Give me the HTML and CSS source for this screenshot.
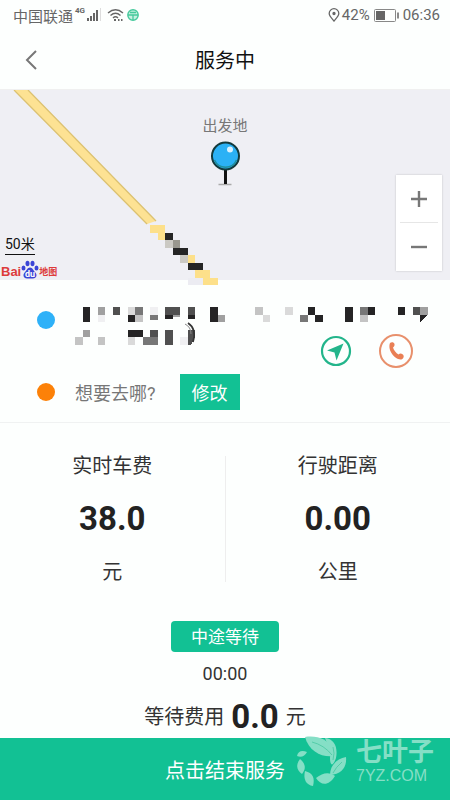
FILE: index.html
```html
<!DOCTYPE html>
<html lang="zh-CN">
<head>
    <meta charset="UTF-8">
    <meta name="viewport" content="width=device-width, initial-scale=1.0">
    <title>服务中</title>
    <link rel="stylesheet" href="styles.css">
</head>
<body>

    <!-- 状态栏 -->
    <div class="status-bar">
        <div class="status-left">
            <span>中国联通</span>
            <span class="network">4G</span>
            <svg class="signal" width="16" height="14" viewBox="0 0 16 14">
                <path d="M0 10h2v3H0zM3 8h2v5H3zM6 5h2v8H6zM9 2h2v11H9z" fill="#666"/>
                <path d="M13.500 0v13" stroke="#ddd"/>
            </svg>
            <svg width="18" height="14" viewBox="0 0 18 14" fill="none" stroke="#666" stroke-width="1.4">
                <path d="M1 5Q8.500-1.500 16 5M3.500 7.500Q8.500 3 13.500 7.500M6 10Q8.500 7.500 11 10"/>
                <path d="M7 12h2M11 12h1.500M14 12h1.500" stroke-width="2"/>
            </svg>
            <svg class="wheel" width="12" height="12" viewBox="0 0 12 12" fill="none" stroke="#45c99c">
                <circle cx="6" cy="6" r="5.200" fill="#c7f0e1" stroke-width="1.400"/>
                <path d="M1 6h10M6 6v5M3 3.500h6" stroke-width="1.300"/>
            </svg>
        </div>
        <div class="status-right">
            <svg width="12" height="14" viewBox="0 0 12 14" fill="none" stroke="#666" stroke-width="1.300">
                <path d="M6 13C4 10.500 1.200 8 1.200 5.500a4.800 4.800 0 0 1 9.600 0C10.800 8 8 10.500 6 13z"/>
                <circle cx="6" cy="5.500" r="1" fill="#666"/>
            </svg>
            <span>42%</span>
            <svg class="battery" width="25" height="13" viewBox="0 0 25 13">
                <rect x=".5" y=".5" width="21" height="12" rx="1" fill="none" stroke="#888"/>
                <path d="M2 2h9v9H2z" fill="#666"/>
                <path d="M24 3.500v6" stroke="#666" stroke-width="1.500"/>
            </svg>
            <span>06:36</span>
        </div>
    </div>

    <header class="header">
        <button class="back" aria-label="返回">
            <svg width="12" height="20" viewBox="0 0 12 20" fill="none" stroke="#777" stroke-width="2">
                <path d="M11 1L2 10l9 9"/>
            </svg>
        </button>
        <h1>服务中</h1>
    </header>

    <!-- 地图 -->
    <div class="map">
        <svg class="road" width="450" height="196" viewBox="0 0 450 196">
            <path d="M14 0H28L156 131L147 134Z" fill="#fde293"/>
            <path d="M14 0L147 134M28 0L156 131" stroke="#dcc272" stroke-width="1.300"/>
            <g transform="scale(7.5)" shape-rendering="crispEdges">
                <path d="M20 18h2v1h-2zM21 19h1v1h-1zM25 22h1v1h-1zM26 24h2v1h-2zM27 25h2v1h-2z" fill="#fde08a"/>
                <path d="M25 25h2v1h-2z" fill="#ececf2"/>
                <path d="M22 20h1v1h-1zM24 22h1v1h-1z" fill="#cbc9c3"/>
                <path d="M23 20h1v1h-1z" fill="#99978e"/>
                <path d="M22 19h1v1h-1zM23 21h2v1h-2zM25 23h2v1h-2z" fill="#252525"/>
            </g>
        </svg>
        <div class="pin">
            <span>出发地</span>
            <svg width="30" height="46" viewBox="0 0 30 46">
                <path d="M8 43.500h13" stroke="#aaa" stroke-width="1.500"/>
                <path d="M15 28v15" stroke="#111" stroke-width="3"/>
                <circle cx="15" cy="15" r="13.500" fill="#2bb1f5" stroke="#143a3c" stroke-width="2"/>
                <path d="M4 19a12 12 0 0 0 22 0" fill="none" stroke="#1f8f9d" stroke-width="1.500"/>
                <circle cx="19.500" cy="8.500" r="3" fill="#d9f2ff"/>
            </svg>
        </div>
        <div class="map-scale">50米</div>
        <div class="map-logo">
            <span class="logo-bai">Bai</span>
            <svg width="18" height="19" viewBox="0 0 18 19" fill="#3b45d6">
                <ellipse cx="2.500" cy="8" rx="2" ry="2.600"/>
                <ellipse cx="6.500" cy="3.500" rx="2" ry="2.800"/>
                <ellipse cx="11.500" cy="3.500" rx="2" ry="2.800"/>
                <ellipse cx="15.500" cy="8" rx="2" ry="2.600"/>
                <path d="M9 7.500c2.500 0 3.500 3 5 4.500 3 3 1 6.500-2 6.500H6c-3 0-5-3.500-2-6.500C5.500 10.500 6.500 7.500 9 7.500z"/>
                <text x="4" y="17" class="logo-du">du</text>
            </svg>
            <span class="logo-map">地图</span>
        </div>
        <div class="zoom">
            <button aria-label="放大">
                <svg width="18" height="18" viewBox="0 0 18 18"><path d="M1 9h16M9 1v16" stroke="#777" stroke-width="2.400"/></svg>
            </button>
            <button aria-label="缩小">
                <svg width="18" height="18" viewBox="0 0 18 18"><path d="M1 9h16" stroke="#777" stroke-width="2.400"/></svg>
            </button>
        </div>
    </div>

    <!-- 行程地址 -->
    <section class="trip">
        <div class="trip-start">
            <span class="dot blue"></span>
            <svg width="354" height="39" viewBox="0 0 354 39">
                <g transform="scale(7.5)" shape-rendering="crispEdges">
                    <path d="M1 0h1v2h-1zM7 1h1v1h-1zM12 1h1v.6h-1zM15 1h1v.6h-1zM18 0h1v2h-1zM7 3h2v1h-2zM31 0h1v1h-1zM32 1h1v1h-1zM36 0h1v2h-1zM39 0h1v1h-1zM43 0h1v1h-1zM46 1h1L46 2z" fill="#252425"/>
                    <path d="M5 0h1v1h-1zM12 0h2v1h-2zM15 0h1v1h-1zM10 3h1v1h-1zM12 3h1v2h-1zM15 3h1v1L15.500 5H15zM45 0h1v1h-1z" fill="#505050"/>
                    <path d="M8 0h1v1h-1zM10 1h1v.7h-1zM9 4h2v1h-2zM30 1h1v1h-1zM38 0h1v1h-1z" fill="#777"/>
                    <path d="M3 0h1v1h-1zM13 1h1v.3h-1zM1 3h1v1h-1zM19 1h1v1h-1zM46 0h1v1h-1z" fill="#a0a0a0"/>
                    <path d="M8 1h1v1h-1zM0 4h1v1h-1zM3 4h1v1h-1zM24 0h1v1h-1zM38 1h1v1h-1z" fill="#c4c4c4"/>
                    <path d="M7 0h1v1h-1zM7 4h1v1h-1zM25 1h1v1h-1zM28 0h1v1h-1z" fill="#dadada"/>
                    <path d="M3 1h1v1h-1zM10 0h1v1h-1zM14 4h1v1h-1z" fill="#f0f0f2"/>
                </g>
                <path d="M113 16Q122 22 118 35" fill="none" stroke="#333" stroke-width="1.600"/>
                <path d="M110 17Q116 20 116 27" fill="none" stroke="#888"/>
            </svg>
        </div>
        <div class="trip-end">
            <span class="dot orange"></span>
            <span class="question">想要去哪?</span>
            <button class="edit">修改</button>
        </div>
        <div class="actions">
            <button aria-label="导航">
                <svg width="32" height="32" viewBox="0 0 32 32">
                    <circle cx="16" cy="16" r="14" fill="none" stroke="#23b58b" stroke-width="2.200"/>
                    <path d="M23.500 8.500L16.500 25.500L14.500 17.500L7 15.500Z" fill="#23b58b"/>
                </svg>
            </button>
            <button aria-label="打电话">
                <svg width="36" height="36" viewBox="0 0 36 36">
                    <circle cx="18" cy="18" r="16" fill="none" stroke="#e8906c" stroke-width="2"/>
                    <path d="M12 10c1.500-1.500 4-1 4.500 1 .4 1.800-.8 2.800-1.500 3.500 1 3 3 5.500 5.500 7 1-.8 2.300-1.500 4-.3 2 1.400 1.300 3.800-.5 5-6 2-15-8.500-12-16.200z" fill="#e97f55"/>
                </svg>
            </button>
        </div>
    </section>

    <!-- 费用和距离 -->
    <section class="stats">
        <div class="stat">
            <span>实时车费</span>
            <strong>38.0</strong>
            <span>元</span>
        </div>
        <div class="stat">
            <span>行驶距离</span>
            <strong>0.00</strong>
            <span>公里</span>
        </div>
    </section>

    <section class="wait">
        <button class="wait-btn">中途等待</button>
        <div class="wait-time">00:00</div>
        <div class="wait-fee">
            <span>等待费用</span>
            <strong>0.0</strong>
            <span>元</span>
        </div>
    </section>

    <footer class="footer">
        <button class="finish">点击结束服务</button>
        <div class="watermark">
            <svg width="52" height="52" viewBox="0 0 52 52" fill="#85dfc6">
                <path d="M9 2C20 0 33 4 36 14L38 21C27 23 13 17 9 2z"/>
                <path d="M29 3C39 4 42 13 40 23C37 32 34 31 34 23C35 15 31 9 29 3z"/>
                <path d="M50 22C51 32 46 39 34 40C34 31 40 24 50 22z"/>
                <path d="M39 41C33 51 25 51 20 43C27 37 34 37 39 41z"/>
                <path d="M9 36C17 38 19 43 17 51C10 50 7 44 9 36z"/>
                <path d="M4 24C10 29 10 34 6 39C0 35 0 29 4 24z"/>
                <path d="M1 21C2 16 6 15 11 17C9 21 5 23 1 21z"/>
                <path d="M16 7Q28 10 36 20M46 27Q40 32 37 38M37 12Q39 18 37 25" fill="none" stroke="#55cda9"/>
            </svg>
            <div>
                <div class="mark-name">七叶子</div>
                <div class="mark-site">7YZ.COM</div>
            </div>
        </div>
    </footer>

</body>
</html>
```

FILE: styles.css
```css
* {
    box-sizing: border-box;
}
body {
    margin: 0;
    min-height: 100vh;
    display: flex;
    flex-direction: column;
    background-color: #fdfffe;
    color: #333;
    font-family: Roboto, "Noto Sans CJK SC", sans-serif;
    font-size: 20px;
}
button {
    padding: 0;
    border: none;
    background: none;
    color: inherit;
    font: inherit;
    cursor: pointer;
}
svg {
    display: block;
    flex: none;
}

/* 状态栏 */
.status-bar {
    display: flex;
    justify-content: space-between;
    height: 30px;
    padding: 0 10px 0 13px;
    color: #666;
    font-size: 15px;
}
.status-left,
.status-right {
    display: flex;
    align-items: center;
    gap: 2px;
}
.network {
    align-self: flex-start;
    padding-top: 6px;
    font-size: 8px;
    font-weight: bold;
}
.signal,
.wheel {
    margin-right: 2px;
}
.battery {
    margin: 0 2px;
}

.header {
    display: flex;
    align-items: center;
    height: 60px;
    padding: 0 25px;
    border-bottom: 1px solid #f0f0f0;
}
.header h1 {
    flex: 1;
    margin: 0;
    padding-right: 12px;
    color: #111;
    font-size: 20px;
    font-weight: normal;
    text-align: center;
}

/* 地图 */
.map {
    position: relative;
    height: 190px;
    background-color: #efeff4;
}
.road {
    position: absolute;
    top: 0;
    left: 0;
}
.pin {
    position: absolute;
    top: 26px;
    left: 50%;
    display: flex;
    flex-direction: column;
    align-items: center;
    gap: 5px;
    transform: translateX(-50%);
    color: #777;
    font-size: 15px;
    line-height: 20px;
}
.map-scale {
    position: absolute;
    left: 5px;
    bottom: 25px;
    border-bottom: 1px solid #111;
    color: #111;
    font-size: 14px;
    line-height: 20px;
}
.map-logo {
    position: absolute;
    left: 1px;
    bottom: 1px;
    display: flex;
    align-items: flex-end;
    color: #dd3b3b;
    font-weight: bold;
    line-height: 14px;
}
.logo-bai {
    font-family: "Liberation Sans", sans-serif;
    font-size: 13px;
}
.logo-du {
    fill: #fff;
    font-size: 9px;
}
.logo-map {
    font-size: 9px;
}
.zoom {
    position: absolute;
    right: 8px;
    bottom: 9px;
    display: flex;
    flex-direction: column;
    width: 46px;
    padding: 0 4px;
    background-color: #fff;
    box-shadow: 0 0 2px rgba(0, 0, 0, 0.2);
}
.zoom button {
    display: flex;
    align-items: center;
    justify-content: center;
    height: 48px;
}
.zoom button:first-child {
    border-bottom: 1px solid #e6e6e6;
}

/* 行程地址 */
.trip {
    position: relative;
    height: 143px;
    padding: 27px 20px 12px 37px;
    border-bottom: 1px solid #f0f2f2;
}
.trip-start,
.trip-end {
    display: flex;
    align-items: flex-start;
    gap: 20px;
}
.trip-start .dot {
    margin-top: 4px;
}
.trip-end {
    align-items: center;
    margin-top: 28px;
}
.dot {
    flex: none;
    width: 18px;
    height: 18px;
    border-radius: 50%;
}
.blue {
    background-color: #2eb1f8;
}
.orange {
    background-color: #fc8108;
}
.question {
    color: #777;
    font-size: 18px;
}
.edit {
    width: 60px;
    height: 36px;
    margin-left: 4px;
    background-color: #12c194;
    color: #fff;
    font-size: 18px;
}
.actions {
    position: absolute;
    top: 53px;
    right: 36px;
    display: flex;
    align-items: center;
    gap: 26px;
}

/* 费用和距离 */
.stats {
    display: flex;
    padding: 33px 0 39px;
}
.stat {
    flex: 1;
    display: flex;
    flex-direction: column;
    align-items: center;
    justify-content: space-between;
    height: 126px;
    line-height: 20px;
}
.stat + .stat {
    border-left: 1px solid #eee;
}
strong {
    color: #222;
    font-size: 33px;
}

/* 等待 */
.wait {
    flex: 1;
    display: flex;
    flex-direction: column;
    align-items: center;
}
.wait-btn {
    width: 108px;
    height: 31px;
    border-radius: 4px;
    background-color: #12c194;
    color: #fff;
    font-size: 17px;
    line-height: 32px;
}
.wait-time {
    margin-top: 10px;
    font-size: 18px;
    line-height: 24px;
}
.wait-fee {
    display: flex;
    align-items: center;
    gap: 7px;
    margin-top: 11px;
    line-height: 40px;
}

.footer {
    position: relative;
    height: 62px;
    background-color: #12c194;
}
.finish {
    width: 100%;
    height: 100%;
    color: #fff;
}
.watermark {
    position: absolute;
    right: 16px;
    bottom: 13px;
    display: flex;
    gap: 8px;
    color: #85dfc6;
    pointer-events: none;
}
.mark-name {
    padding-top: 3px;
    font-size: 26px;
    font-weight: bold;
    line-height: 28px;
}
.mark-site {
    font-family: "Liberation Sans", sans-serif;
    font-size: 16px;
    line-height: 20px;
}
```
